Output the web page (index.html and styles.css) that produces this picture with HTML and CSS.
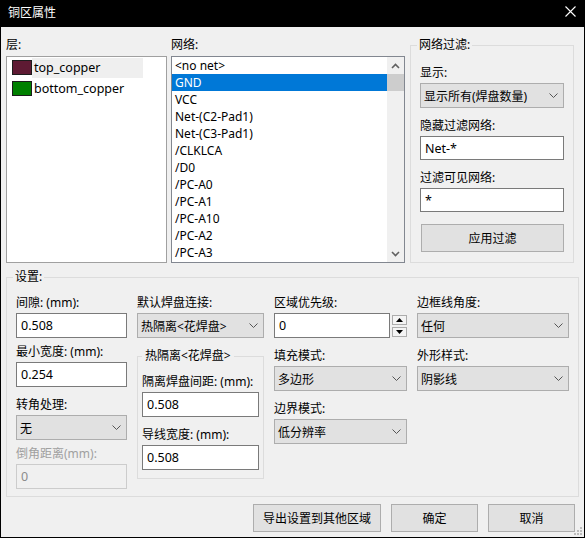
FILE: index.html
```html
<!DOCTYPE html>
<html>
<head>
  <title>铜区属性</title>
  <link rel="stylesheet" href="styles.css">
</head>
<body>
  <div class="dialog">
    <div class="titlebar">
      <span class="title">铜区属性</span>
      <svg class="close" width="11" height="11" viewBox="0 0 11 11">
        <path d="M0.5 0.5 L10.5 10.5 M10.5 0.5 L0.5 10.5" stroke="#fff" stroke-width="1.1" fill="none"/>
      </svg>
    </div>

    <div class="content">
      <div class="top">
        <div class="layers">
          <div class="caption">层:</div>
          <div class="listbox layer-list">
            <div class="layer-row">
              <span class="swatch top"></span>
              <span class="layer-name current">top_copper</span>
            </div>
            <div class="layer-row">
              <span class="swatch bottom"></span>
              <span class="layer-name">bottom_copper</span>
            </div>
          </div>
        </div>

        <div class="nets">
          <div class="caption">网络:</div>
          <div class="listbox net-list">
            <div class="net-items">
              <div class="net-item">&lt;no net&gt;</div>
              <div class="net-item selected">GND</div>
              <div class="net-item">VCC</div>
              <div class="net-item">Net-(C2-Pad1)</div>
              <div class="net-item">Net-(C3-Pad1)</div>
              <div class="net-item">/CLKLCA</div>
              <div class="net-item">/D0</div>
              <div class="net-item">/PC-A0</div>
              <div class="net-item">/PC-A1</div>
              <div class="net-item">/PC-A10</div>
              <div class="net-item">/PC-A2</div>
              <div class="net-item">/PC-A3</div>
            </div>
            <div class="vscroll">
              <div class="sb-btn">
                <svg width="9" height="6" viewBox="0 0 9 6"><path d="M1 5 L4.5 1.5 L8 5" stroke="#606060" stroke-width="1.6" fill="none"/></svg>
              </div>
              <div class="sb-thumb"></div>
              <div class="sb-track"></div>
              <div class="sb-btn">
                <svg width="9" height="6" viewBox="0 0 9 6"><path d="M1 1 L4.5 4.5 L8 1" stroke="#606060" stroke-width="1.6" fill="none"/></svg>
              </div>
            </div>
          </div>
        </div>

        <fieldset class="group filter">
          <legend>网络过滤:</legend>
          <div class="field">
            <label>显示:</label>
            <div class="combo">
              <span>显示所有(焊盘数量)</span>
              <svg width="9" height="5" viewBox="0 0 9 5"><path d="M0.5 0.5 L4.5 4.5 L8.5 0.5" stroke="#555" fill="none"/></svg>
            </div>
          </div>
          <div class="field">
            <label>隐藏过滤网络:</label>
            <input class="text short" type="text" value="Net-*">
          </div>
          <div class="field">
            <label>过滤可见网络:</label>
            <input class="text short" type="text" value="*">
          </div>
          <button class="btn apply">应用过滤</button>
        </fieldset>
      </div>

      <fieldset class="group settings">
        <legend>设置:</legend>
        <div class="settings-grid">
          <div class="col">
            <div class="field">
              <label>间隙: (mm):</label>
              <input class="text" type="text" value="0.508">
            </div>
            <div class="field near">
              <label>最小宽度: (mm):</label>
              <input class="text" type="text" value="0.254">
            </div>
            <div class="field">
              <label>转角处理:</label>
              <div class="combo">
                <span>无</span>
                <svg width="9" height="5" viewBox="0 0 9 5"><path d="M0.5 0.5 L4.5 4.5 L8.5 0.5" stroke="#555" fill="none"/></svg>
              </div>
            </div>
            <div class="field near disabled">
              <label>倒角距离(mm):</label>
              <input class="text" type="text" value="0" disabled>
            </div>
          </div>

          <div class="col">
            <div class="field">
              <label>默认焊盘连接:</label>
              <div class="combo">
                <span>热隔离&lt;花焊盘&gt;</span>
                <svg width="9" height="5" viewBox="0 0 9 5"><path d="M0.5 0.5 L4.5 4.5 L8.5 0.5" stroke="#555" fill="none"/></svg>
              </div>
            </div>
            <fieldset class="group thermal">
              <legend>热隔离&lt;花焊盘&gt;</legend>
              <div class="field">
                <label>隔离焊盘间距: (mm):</label>
                <input class="text" type="text" value="0.508">
              </div>
              <div class="field">
                <label>导线宽度: (mm):</label>
                <input class="text" type="text" value="0.508">
              </div>
            </fieldset>
          </div>

          <div class="col">
            <div class="field">
              <label>区域优先级:</label>
              <div class="spin-row">
                <input class="text" type="text" value="0">
                <div class="spin">
                  <div class="spin-btn">
                    <svg width="7" height="4" viewBox="0 0 7 4"><path d="M0 4 L3.5 0 L7 4 Z" fill="#000"/></svg>
                  </div>
                  <div class="spin-btn">
                    <svg width="7" height="4" viewBox="0 0 7 4"><path d="M0 0 L3.5 4 L7 0 Z" fill="#000"/></svg>
                  </div>
                </div>
              </div>
            </div>
            <div class="field">
              <label>填充模式:</label>
              <div class="combo">
                <span>多边形</span>
                <svg width="9" height="5" viewBox="0 0 9 5"><path d="M0.5 0.5 L4.5 4.5 L8.5 0.5" stroke="#555" fill="none"/></svg>
              </div>
            </div>
            <div class="field">
              <label>边界模式:</label>
              <div class="combo">
                <span>低分辨率</span>
                <svg width="9" height="5" viewBox="0 0 9 5"><path d="M0.5 0.5 L4.5 4.5 L8.5 0.5" stroke="#555" fill="none"/></svg>
              </div>
            </div>
          </div>

          <div class="col">
            <div class="field">
              <label>边框线角度:</label>
              <div class="combo">
                <span>任何</span>
                <svg width="9" height="5" viewBox="0 0 9 5"><path d="M0.5 0.5 L4.5 4.5 L8.5 0.5" stroke="#555" fill="none"/></svg>
              </div>
            </div>
            <div class="field">
              <label>外形样式:</label>
              <div class="combo">
                <span>阴影线</span>
                <svg width="9" height="5" viewBox="0 0 9 5"><path d="M0.5 0.5 L4.5 4.5 L8.5 0.5" stroke="#555" fill="none"/></svg>
              </div>
            </div>
          </div>
        </div>
      </fieldset>

      <div class="actions">
        <button class="btn export">导出设置到其他区域</button>
        <button class="btn dlg">确定</button>
        <button class="btn dlg">取消</button>
      </div>
    </div>

    <svg class="grip" width="8" height="8" viewBox="0 0 8 8">
      <rect x="6" y="0" width="2" height="2" fill="#bcbcbc"/>
      <rect x="3" y="3" width="2" height="2" fill="#bcbcbc"/>
      <rect x="6" y="3" width="2" height="2" fill="#bcbcbc"/>
      <rect x="0" y="6" width="2" height="2" fill="#bcbcbc"/>
      <rect x="3" y="6" width="2" height="2" fill="#bcbcbc"/>
      <rect x="6" y="6" width="2" height="2" fill="#bcbcbc"/>
    </svg>
  </div>
</body>
</html>
```

FILE: styles.css
```css
* {
  box-sizing: border-box;
}

body {
  margin: 0;
  font-family: "Noto Sans", "Noto Sans CJK SC", sans-serif;
  font-size: 12px;
  color: #000;
  background-color: #f0f0f0;
}

.dialog {
  position: relative;
  width: 585px;
  height: 538px;
  border: 1px solid #000;
  border-top: 0;
  background-color: #f0f0f0;
}

.titlebar {
  height: 27px;
  background-color: #000;
  color: #fff;
  display: flex;
  align-items: center;
  padding: 0 8px 3px 7px;
}

.close {
  margin-left: auto;
  margin-bottom: 2px;
}

.content {
  padding: 10px 9px 0 5px;
}

.top {
  display: flex;
  align-items: flex-start;
}

.layers {
  width: 161px;
}

.nets {
  width: 234px;
  margin-left: 4px;
}

.caption {
  line-height: 16px;
  height: 16px;
  margin-bottom: 3px;
}

.listbox {
  height: 207px;
  background-color: #fff;
  border: 1px solid #828790;
}

.layer-list {
  border-color: #a0a0a0;
}

.layer-row {
  display: flex;
  align-items: center;
  height: 21px;
  padding-left: 5px;
}

.swatch {
  width: 20px;
  height: 15px;
  border: 1px solid #1c1c1c;
}

.swatch.top {
  background-color: #5e1a33;
}

.swatch.bottom {
  background-color: #008000;
}

.layer-name {
  height: 20px;
  line-height: 20px;
  padding-left: 2px;
  width: 111px;
  font-size: 12.5px;
}

.layer-name.current {
  background-color: #efefef;
}

.net-list {
  display: flex;
}

.net-items {
  flex: 1;
}

.net-item {
  height: 17px;
  line-height: 17px;
  padding-left: 3px;
  white-space: nowrap;
}

.net-item.selected {
  background-color: #0078d7;
  color: #fff;
}

.vscroll {
  width: 17px;
  background-color: #f0f0f0;
  display: flex;
  flex-direction: column;
}

.sb-btn {
  height: 17px;
  display: flex;
  align-items: center;
  justify-content: center;
}

.sb-thumb {
  height: 17px;
  background-color: #cdcdcd;
}

.sb-track {
  flex: 1;
}

.group {
  margin: 0;
  padding: 0 9px;
  border: 1px solid #dcdcdc;
  min-width: 0;
}

.group legend {
  padding: 0 2px;
  margin-left: -3px;
  line-height: 16px;
}

.filter {
  width: 164px;
  height: 226px;
  margin-left: 5px;
}

.field label {
  display: block;
  line-height: 16px;
  margin-bottom: 2px;
  white-space: nowrap;
}

.filter .field:first-of-type {
  margin-top: 12px;
}

.field + .field {
  margin-top: 10px;
}

.field.near {
  margin-top: 6px;
}

.field.disabled label {
  color: #a0a0a0;
}

.text {
  display: block;
  width: 100%;
  height: 25px;
  margin: 0;
  padding: 0 4px;
  border: 1px solid #7a7a7a;
  background-color: #fff;
  font-family: inherit;
  font-size: 12.5px;
  color: #000;
  outline: none;
}

.text.short {
  height: 24px;
}

.text:disabled {
  background-color: #f0f0f0;
  border-color: #cccccc;
  color: #8c8c8c;
}

.combo {
  display: flex;
  align-items: center;
  justify-content: space-between;
  height: 25px;
  padding: 0 5px 0 3px;
  border: 1px solid #adadad;
  background-color: #e1e1e1;
  white-space: nowrap;
}

.btn {
  display: block;
  height: 28px;
  margin: 0;
  padding: 0;
  border: 1px solid #adadad;
  background-color: #e1e1e1;
  font-family: inherit;
  font-size: 12px;
  color: #000;
}

.apply {
  width: 143px;
  margin: 12px 0 0 1px;
}

.settings {
  width: 573px;
  height: 228px;
  margin-top: 6px;
}

.settings-grid {
  display: grid;
  grid-template-columns: 111px 127px 133px 152px;
  column-gap: 10px;
  align-items: start;
  padding-top: 10px;
}

.col {
  display: flex;
  flex-direction: column;
}

.thermal {
  margin-top: 10px;
  padding: 0 4px 8px 4px;
}

.thermal legend {
  margin-left: 0;
  padding: 0 3px;
}

.thermal .field:first-of-type {
  margin-top: 10px;
}

.spin-row {
  display: flex;
  align-items: flex-start;
}

.spin-row .text {
  width: 116px;
}

.spin {
  display: flex;
  flex-direction: column;
  gap: 2px;
  margin: 2px 0 0 2px;
}

.spin-btn {
  width: 15px;
  height: 10px;
  border: 1px solid #acacac;
  background-color: #f4f4f4;
  display: flex;
  align-items: center;
  justify-content: center;
}

.actions {
  display: flex;
  justify-content: flex-end;
  gap: 10px;
  margin-top: 7px;
}

.export {
  width: 128px;
}

.dlg {
  width: 87px;
}

.grip {
  position: absolute;
  right: 2px;
  bottom: 2px;
}
```
